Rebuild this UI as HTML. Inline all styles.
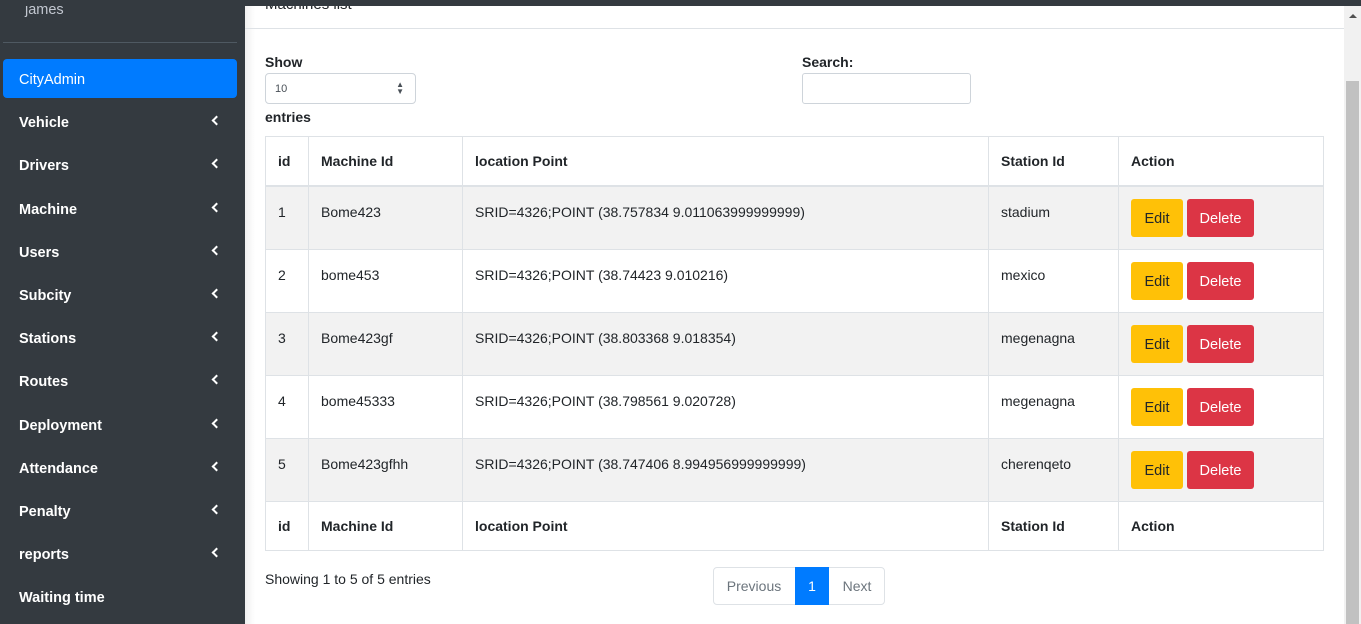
<!DOCTYPE html>
<html><head><style>
*{box-sizing:border-box;margin:0;padding:0}
body{width:1361px;height:624px;overflow:hidden;background:#fff;font-family:"Liberation Sans",sans-serif;font-size:14px;color:#212529;position:relative}
.a{position:absolute}
#sb{left:0;top:0;width:245px;height:624px;background:#343a40}
.it{position:absolute;left:19px;color:#fff;font-size:14.5px}
.ch{position:absolute;left:213px;width:7px;height:7px;border-left:2.5px solid #fff;border-bottom:2.5px solid #fff;transform:rotate(45deg)}
.b{font-weight:bold}
.vl{position:absolute;width:1px;background:#dee2e6}
.hl{position:absolute;left:265px;width:1059px;height:1px;background:#dee2e6}
.stripe{position:absolute;left:266px;width:1057px;height:63px;background:#f2f2f2}
.cell{position:absolute;font-size:14px}
.edit{position:absolute;left:1131px;width:52px;height:38px;background:#ffc107;border-radius:3px;color:#212529;text-align:center;line-height:40px;font-size:14.5px}
.del{position:absolute;left:1187px;width:67px;height:38px;background:#dc3545;border-radius:3px;color:#fff;text-align:center;line-height:40px;font-size:14.5px}
</style></head><body>
<div class="a" style="left:0;top:0;width:1361px;height:6px;background:#343a40;z-index:5"></div>
<div id="sb" class="a"></div>
<div class="a" style="left:245px;top:0;width:10px;height:624px;background:linear-gradient(90deg,rgba(0,0,0,.06),rgba(0,0,0,0))"></div>
<div class="it" style="left:25px;top:2px;color:#c2c7d0">james</div>
<div class="a" style="left:3px;top:42px;width:234px;height:1px;background:#4f5962"></div>
<div class="a" style="left:3px;top:59px;width:234px;height:39px;background:#007bff;border-radius:4px"></div>
<div class="it" style="top:72px">CityAdmin</div>
<div class="it b" style="top:115px">Vehicle</div><div class="ch" style="top:117px"></div>
<div class="it b" style="top:158px">Drivers</div><div class="ch" style="top:160px"></div>
<div class="it b" style="top:202px">Machine</div><div class="ch" style="top:204px"></div>
<div class="it b" style="top:245px">Users</div><div class="ch" style="top:247px"></div>
<div class="it b" style="top:288px">Subcity</div><div class="ch" style="top:290px"></div>
<div class="it b" style="top:331px">Stations</div><div class="ch" style="top:333px"></div>
<div class="it b" style="top:374px">Routes</div><div class="ch" style="top:376px"></div>
<div class="it b" style="top:418px">Deployment</div><div class="ch" style="top:420px"></div>
<div class="it b" style="top:461px">Attendance</div><div class="ch" style="top:463px"></div>
<div class="it b" style="top:504px">Penalty</div><div class="ch" style="top:506px"></div>
<div class="it b" style="top:547px">reports</div><div class="ch" style="top:549px"></div>
<div class="it b" style="top:590px">Waiting time</div>

<div class="a" style="left:265px;top:-4px;font-size:15px;color:#212529">Machines list</div>
<div class="a" style="left:245px;top:28px;width:1099px;height:1px;background:#dee2e6"></div>

<div class="a b" style="left:265px;top:54px">Show</div>
<div class="a" style="left:265px;top:73px;width:151px;height:31px;border:1px solid #ced4da;border-radius:4px;font-size:11px;padding:9px 9px;color:#495057">10<span style="position:absolute;right:11px;top:7px;font-size:8px;line-height:7px">▲<br>▼</span></div>
<div class="a b" style="left:265px;top:109px">entries</div>
<div class="a b" style="left:802px;top:54px">Search:</div>
<div class="a" style="left:802px;top:73px;width:169px;height:31px;border:1px solid #ced4da;border-radius:3px"></div>

<div class="stripe" style="top:187px"></div>
<div class="stripe" style="top:313px"></div>
<div class="stripe" style="top:439px"></div>
<div class="hl" style="top:136px"></div>
<div class="hl" style="top:185px;height:2px"></div>
<div class="hl" style="top:249px"></div>
<div class="hl" style="top:312px"></div>
<div class="hl" style="top:375px"></div>
<div class="hl" style="top:438px"></div>
<div class="hl" style="top:501px"></div>
<div class="hl" style="top:550px"></div>
<div class="vl" style="left:265px;top:136px;height:415px"></div>
<div class="vl" style="left:308px;top:136px;height:415px"></div>
<div class="vl" style="left:462px;top:136px;height:415px"></div>
<div class="vl" style="left:988px;top:136px;height:415px"></div>
<div class="vl" style="left:1118px;top:136px;height:415px"></div>
<div class="vl" style="left:1323px;top:136px;height:415px"></div>

<div class="cell b" style="left:278px;top:153px">id</div>
<div class="cell b" style="left:321px;top:153px">Machine Id</div>
<div class="cell b" style="left:475px;top:153px">location Point</div>
<div class="cell b" style="left:1001px;top:153px">Station Id</div>
<div class="cell b" style="left:1131px;top:153px">Action</div>

<div class="cell" style="left:278px;top:204px">1</div><div class="cell" style="left:321px;top:204px">Bome423</div><div class="cell" style="left:475px;top:204px">SRID=4326;POINT (38.757834 9.011063999999999)</div><div class="cell" style="left:1001px;top:204px">stadium</div>
<div class="cell" style="left:278px;top:267px">2</div><div class="cell" style="left:321px;top:267px">bome453</div><div class="cell" style="left:475px;top:267px">SRID=4326;POINT (38.74423 9.010216)</div><div class="cell" style="left:1001px;top:267px">mexico</div>
<div class="cell" style="left:278px;top:330px">3</div><div class="cell" style="left:321px;top:330px">Bome423gf</div><div class="cell" style="left:475px;top:330px">SRID=4326;POINT (38.803368 9.018354)</div><div class="cell" style="left:1001px;top:330px">megenagna</div>
<div class="cell" style="left:278px;top:393px">4</div><div class="cell" style="left:321px;top:393px">bome45333</div><div class="cell" style="left:475px;top:393px">SRID=4326;POINT (38.798561 9.020728)</div><div class="cell" style="left:1001px;top:393px">megenagna</div>
<div class="cell" style="left:278px;top:456px">5</div><div class="cell" style="left:321px;top:456px">Bome423gfhh</div><div class="cell" style="left:475px;top:456px">SRID=4326;POINT (38.747406 8.994956999999999)</div><div class="cell" style="left:1001px;top:456px">cherenqeto</div>

<div class="edit" style="top:199px">Edit</div><div class="del" style="top:199px">Delete</div>
<div class="edit" style="top:262px">Edit</div><div class="del" style="top:262px">Delete</div>
<div class="edit" style="top:325px">Edit</div><div class="del" style="top:325px">Delete</div>
<div class="edit" style="top:388px">Edit</div><div class="del" style="top:388px">Delete</div>
<div class="edit" style="top:451px">Edit</div><div class="del" style="top:451px">Delete</div>

<div class="cell b" style="left:278px;top:518px">id</div>
<div class="cell b" style="left:321px;top:518px">Machine Id</div>
<div class="cell b" style="left:475px;top:518px">location Point</div>
<div class="cell b" style="left:1001px;top:518px">Station Id</div>
<div class="cell b" style="left:1131px;top:518px">Action</div>

<div class="cell" style="left:265px;top:571px">Showing 1 to 5 of 5 entries</div>
<div class="a" style="left:713px;top:567px;width:172px;height:38px;border:1px solid #dee2e6;border-radius:4px"></div>
<div class="a" style="left:713px;top:567px;width:82px;height:38px;line-height:38px;text-align:center;color:#6c757d">Previous</div>
<div class="a" style="left:795px;top:567px;width:34px;height:38px;line-height:38px;text-align:center;color:#fff;background:#007bff">1</div>
<div class="a" style="left:829px;top:567px;width:56px;height:38px;line-height:38px;text-align:center;color:#6c757d">Next</div>

<div class="a" style="left:1344px;top:6px;width:17px;height:618px;background:#f1f1f1"></div>
<div class="a" style="left:1346px;top:81px;width:13px;height:543px;background:#c1c1c1"></div>
<div class="a" style="left:1349px;top:14px;width:0;height:0;border-left:4px solid transparent;border-right:4px solid transparent;border-bottom:4px solid #505050"></div>
</body></html>
